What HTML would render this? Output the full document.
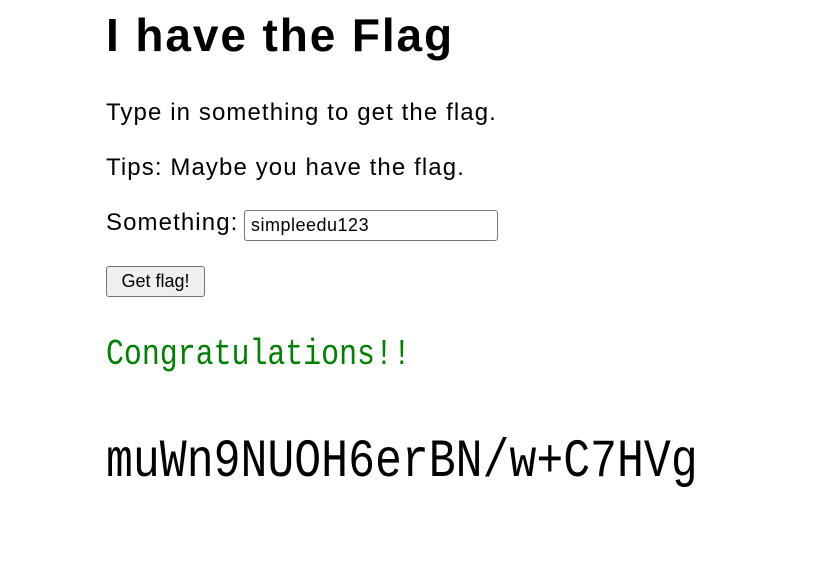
<!DOCTYPE html>
<html><head><meta charset="utf-8"><style>
body{margin:0;width:829px;height:564px;background:#fff;position:relative;font-family:"Liberation Sans","DejaVu Sans",sans-serif;color:#000;overflow:hidden}
.a{position:absolute;white-space:nowrap}
h1{margin:0;font-size:46px;font-weight:bold;letter-spacing:1.9px}
.p{font-size:24px;line-height:30px;letter-spacing:1.1px}
.inp{position:absolute;left:244px;top:210px;height:29px;border:1px solid #767676;border-radius:3px;box-sizing:content-box;font-size:18px;line-height:29px;padding-left:6px;width:246px;letter-spacing:0.5px}
.btn{position:absolute;left:106px;top:266px;width:97px;height:29px;border:1px solid #767676;border-radius:3px;background:#efefef;font-size:18px;line-height:29px;text-align:center}
.m{font-family:"Liberation Mono",monospace;transform-origin:0 50%;transform:scaleX(0.83)}
</style></head><body>
<h1 class="a" style="left:106px;top:8px;line-height:54px">I have the Flag</h1>
<div class="a p" style="left:106px;top:98px">Type in something to get the flag.</div>
<div class="a p" style="left:106px;top:153px">Tips: Maybe you have the flag.</div>
<div class="a p" style="left:106px;top:208px">Something:</div>
<div class="inp">simpleedu123</div>
<div class="btn">Get flag!</div>
<div class="a m" style="left:106px;top:333px;font-size:36px;line-height:44px;color:#008000">Congratulations!!</div>
<div class="a m" style="left:106px;top:430px;font-size:54px;line-height:66px">muWn9NUOH6erBN/w+C7HVg</div>
</body></html>
